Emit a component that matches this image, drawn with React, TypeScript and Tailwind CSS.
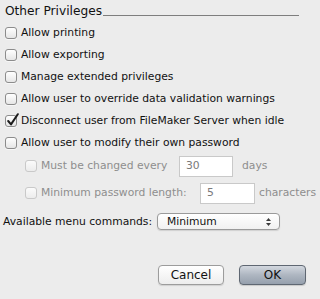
import React from "react";

function Checkbox({ checked = false, disabled = false }: { checked?: boolean; disabled?: boolean }) {
  return (
    <div
      className={`relative w-[12px] h-[12px] shrink-0 rounded-[3px] border bg-gradient-to-b ${
        disabled
          ? "border-[#c9c9c9] from-[#fbfbfb] to-[#ececec]"
          : "border-[#8c8c8c] from-white to-[#e6e6e6] shadow-[0_1px_0_rgba(255,255,255,0.6)]"
      }`}
    >
      {checked && (
        <svg
          className="absolute left-[0px] top-[-3px]"
          width="13"
          height="14"
          viewBox="0 0 13 14"
        >
          <path
            d="M2.2 8 L5 11.4 L11.8 1.2"
            fill="none"
            stroke="#1c1c1c"
            strokeWidth="2"
            strokeLinecap="round"
            strokeLinejoin="round"
          />
        </svg>
      )}
    </div>
  );
}

const options = [
  { label: "Allow printing", checked: false },
  { label: "Allow exporting", checked: false },
  { label: "Manage extended privileges", checked: false },
  { label: "Allow user to override data validation warnings", checked: false },
  { label: "Disconnect user from FileMaker Server when idle", checked: true },
  { label: "Allow user to modify their own password", checked: false },
];

export default function App() {
  return (
    <div className="w-[320px] h-[299px] overflow-hidden bg-[#ececec] text-[#111] font-['DejaVu_Sans',sans-serif]">
      {/* Header */}
      <div className="flex items-start h-[22px] pl-[5px] pt-[4px]">
        <span className="text-[12.2px] leading-[15px]">Other Privileges</span>
        <div className="ml-[1px] mt-[11px] h-px w-[196px] bg-[#7e7e7e]" />
      </div>

      {/* Options */}
      {options.map((o) => (
        <div key={o.label} className="flex items-center h-[22px] pl-[5px] gap-[4px]">
          <Checkbox checked={o.checked} />
          <span className="text-[10.75px] leading-[14px]">{o.label}</span>
        </div>
      ))}

      {/* Password sub options */}
      <div className="flex items-center h-[24px] pl-[25px] text-[10.75px] text-[#8e8e8e]">
        <Checkbox disabled />
        <span className="w-[142px] pl-[4px] leading-[14px]">Must be changed every</span>
        <div className="w-[54px] h-[21px] bg-white border border-[#c9c9c9] pl-[6px] flex items-center text-[#7a7a7a]">30</div>
        <span className="ml-[9px] leading-[14px]">days</span>
      </div>
      <div className="flex items-center h-[24px] mt-[3px] pl-[25px] text-[10.75px] text-[#8e8e8e]">
        <Checkbox disabled />
        <span className="w-[163px] pl-[4px] leading-[14px]">Minimum password length:</span>
        <div className="w-[55px] h-[21px] bg-white border border-[#c9c9c9] pl-[6px] flex items-center text-[#7a7a7a]">5</div>
        <span className="ml-[4px] leading-[14px]">characters</span>
      </div>

      {/* Menu commands */}
      <div className="flex items-center h-[17px] mt-[8px] pl-[3px] text-[10.75px]">
        <span className="w-[154px] leading-[14px]">Available menu commands:</span>
        <div className="relative flex items-center w-[123px] h-[17px] pl-[9px] rounded-[4px] border border-[#9a9a9a] bg-gradient-to-b from-white to-[#f1f1f1] shadow-[0_1px_1px_rgba(0,0,0,0.12)]">
          <span className="leading-[14px]">Minimum</span>
          <svg className="absolute right-[8px] top-[3px]" width="5" height="10" viewBox="0 0 5 10">
            <path d="M0 4 L2.5 1 L5 4 Z" fill="#3a3a3a" />
            <path d="M0 6 L2.5 9 L5 6 Z" fill="#3a3a3a" />
          </svg>
        </div>
      </div>

      {/* Buttons */}
      <div className="flex mt-[35px] pl-[158px] gap-[15px] text-[12px]">
        <button className="w-[66px] h-[20px] rounded-[4px] border border-[#9c9c9c] bg-gradient-to-b from-white to-[#ededed] shadow-[0_1px_1px_rgba(0,0,0,0.12)] leading-[14px]">
          Cancel
        </button>
        <button className="w-[67px] h-[20px] rounded-[4px] border border-[#5f6772] bg-gradient-to-b from-[#d3d8df] via-[#aeb6c1] to-[#96a0ad] shadow-[0_1px_1px_rgba(0,0,0,0.15)] leading-[14px]">
          OK
        </button>
      </div>
    </div>
  );
}
